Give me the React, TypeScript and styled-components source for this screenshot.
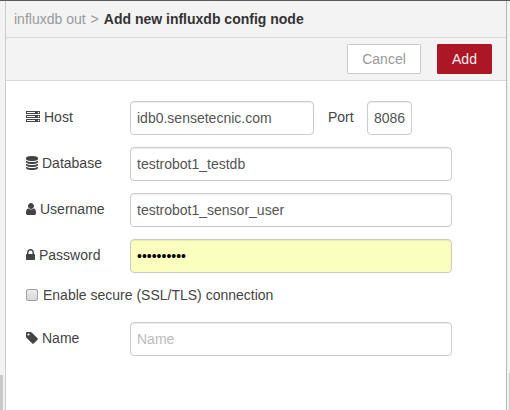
import React from "react";
import styled, { createGlobalStyle } from "styled-components";

const GlobalStyle = createGlobalStyle`
  * { box-sizing: border-box; }
  body {
    margin: 0;
    background: #f3f3f3;
    color: #444;
    font: 14px/20px "Liberation Sans", Arial, sans-serif;
  }
`;

const Workspace = styled.div`
  display: flex;
  height: 410px;
  border-top: 1px solid #5c595d;
  background: #f3f3f3;
  overflow: hidden;
`;

const Gutter = styled.div<{ $width: number }>`
  display: flex;
  flex: 0 0 ${(p) => p.$width}px;
  align-items: flex-end;
`;

const ScrollThumb = styled.div<{ $width: number; $height: number }>`
  width: ${(p) => p.$width}px;
  height: ${(p) => p.$height}px;
  margin-left: ${(p) => (p.$width === 1 ? "auto" : "0")};
  background: #c9c9c9;
`;

const Tray = styled.main`
  flex: 1;
  border-left: 1px solid #ccc;
  border-right: 1px solid #b8b8b8;
  background: #fff;
`;

const Header = styled.header`
  display: flex;
  gap: 5px;
  height: 37px;
  padding: 8px;
  border-bottom: 1px solid #d9d9d9;
  background: #f3f3f3;
  color: #999;
`;

const Title = styled.strong`
  color: #333;
`;

const Toolbar = styled.div`
  display: flex;
  justify-content: flex-end;
  gap: 16px;
  height: 43px;
  padding: 6px 14px 0 0;
  border-bottom: 1px solid #d9d9d9;
  background: #f3f3f3;
`;

const Button = styled.button<{ $primary?: boolean }>`
  width: ${(p) => (p.$primary ? 55 : 74)}px;
  height: 30px;
  padding: 0;
  border: 1px solid ${(p) => (p.$primary ? "#ad1625" : "#ccc")};
  border-radius: 1px;
  background: ${(p) => (p.$primary ? "#ad1625" : "#fff")};
  color: ${(p) => (p.$primary ? "#eee" : "#999")};
  font: inherit;
`;

const Form = styled.form`
  display: flex;
  flex-direction: column;
  gap: 12px;
  padding: 20px;
`;

const Row = styled.div`
  display: flex;
  align-items: flex-start;
  height: 34px;
`;

const Label = styled.label`
  display: flex;
  flex: 0 0 104px;
  gap: 4px;
  padding-top: 6px;
`;

const PortLabel = styled.label`
  width: 53px;
  padding: 6px 0 0 14px;
`;

const Input = styled.input<{ $width?: number; $filled?: boolean }>`
  width: ${(p) => p.$width ?? 322}px;
  height: 34px;
  padding: 0 6px 1px;
  border: 1px solid #ccc;
  border-radius: 4px;
  outline: none;
  background: ${(p) => (p.$filled ? "#faffbd" : "#fff")};
  box-shadow: inset 0 1px 1px rgba(0, 0, 0, 0.075);
  color: ${(p) => (p.$filled ? "#000" : "#555")};
  font: inherit;
  &::placeholder { color: #bbb; opacity: 1; }
`;

const CheckRow = styled.label`
  display: flex;
  align-items: center;
  gap: 5px;
  height: 20px;
  margin-bottom: 5px;
`;

const Checkbox = styled.input`
  appearance: none;
  width: 12px;
  height: 12px;
  margin: 0;
  border: 1px solid #a0a0a0;
  border-radius: 2px;
  background: linear-gradient(#ececec, #d9d9d9);
`;

const Glyph = styled.svg`
  display: block;
  flex: none;
  height: 14px;
  margin-top: 3px;
  fill: #444;
`;

const stack =
  "q237 0 443-43t325-127v170q0 69-103 128t-280 93.5-385 34.5-385-34.5-280-93.5-103-128v-170q119 84 325 127t443 43z";
const led = "q0-40-28-68t-68-28-68 28-28 68 28 68 68 28 68-28 28-68z";

const icons = {
  server: {
    x: 0,
    width: 1792,
    d: `M128 1408h1024v-128h-1024v128zM128 896h1024v-128h-1024v128zM1696 1344${led}M128 384h1024v-128h-1024v128zM1696 832${led}M1696 320${led}M1792 1152v384h-1792v-384h1792zM1792 640v384h-1792v-384h1792zM1792 128v384h-1792v-384h1792z`,
  },
  database: {
    x: 128,
    width: 1536,
    d: `M896 768${stack}M896 1536${stack}M896 1152${stack}M896 0q208 0 385 34.5t280 93.5 103 128v128q0 69-103 128t-280 93.5-385 34.5-385-34.5-280-93.5-103-128v-128q0-69 103-128t280-93.5 385-34.5z`,
  },
  user: {
    x: 256,
    width: 1280,
    d: "M1536 1399q0 109-62.5 187t-150.5 78h-854q-88 0-150.5-78t-62.5-187q0-85 8.5-160.5t31.5-152 58.5-131 94-89 134.5-34.5q131 128 313 128t313-128q76 0 134.5 34.5t94 89 58.5 131 31.5 152 8.5 160.5zm-256-887q0 159-112.5 271.5t-271.5 112.5-271.5-112.5-112.5-271.5 112.5-271.5 271.5-112.5 271.5 112.5 112.5 271.5z",
  },
  lock: {
    x: 320,
    width: 1152,
    d: "M640 768h512v-192q0-106-75-181t-181-75-181 75-75 181v192zm832 96v576q0 40-28 68t-68 28h-960q-40 0-68-28t-28-68v-576q0-40 28-68t68-28h32v-192q0-184 132-316t316-132 316 132 132 316v192h32q40 0 68 28t28 68z",
  },
  tag: {
    x: 128,
    width: 1536,
    d: "M576 448q0-53-37.5-90.5t-90.5-37.5-90.5 37.5-37.5 90.5 37.5 90.5 90.5 37.5 90.5-37.5 37.5-90.5zm1067 576q0 53-37 90l-491 492q-39 37-91 37-53 0-90-37l-715-716q-38-37-64.5-101t-26.5-117v-416q0-52 38-90t90-38h416q53 0 117 26.5t102 64.5l715 714q37 39 37 91z",
  },
};

function Icon({ name }: { name: keyof typeof icons }) {
  const { x, width, d } = icons[name];
  return (
    <Glyph viewBox={`${x} 0 ${width} 1792`} width={width / 128} aria-hidden>
      <path d={d} fillRule={name === "server" ? "evenodd" : "nonzero"} />
    </Glyph>
  );
}

export default function App() {
  return (
    <>
      <GlobalStyle />
      <Workspace>
        <Gutter $width={5}>
          <ScrollThumb $width={3} $height={35} />
        </Gutter>
        <Tray>
          <Header>
            <span>influxdb out</span>
            <span>&gt;</span>
            <Title>Add new influxdb config node</Title>
          </Header>
          <Toolbar>
            <Button type="button">Cancel</Button>
            <Button type="button" $primary>Add</Button>
          </Toolbar>
          <Form autoComplete="off">
            <Row>
              <Label htmlFor="host"><Icon name="server" />Host</Label>
              <Input id="host" $width={184} defaultValue="idb0.sensetecnic.com" />
              <PortLabel htmlFor="port">Port</PortLabel>
              <Input id="port" $width={45} defaultValue="8086" />
            </Row>
            <Row>
              <Label htmlFor="database"><Icon name="database" />Database</Label>
              <Input id="database" defaultValue="testrobot1_testdb" />
            </Row>
            <Row>
              <Label htmlFor="username"><Icon name="user" />Username</Label>
              <Input id="username" defaultValue="testrobot1_sensor_user" />
            </Row>
            <Row>
              <Label htmlFor="password"><Icon name="lock" />Password</Label>
              <Input id="password" type="password" $filled defaultValue="abcdefghij" />
            </Row>
            <CheckRow>
              <Checkbox type="checkbox" />
              Enable secure (SSL/TLS) connection
            </CheckRow>
            <Row>
              <Label htmlFor="name"><Icon name="tag" />Name</Label>
              <Input id="name" placeholder="Name" />
            </Row>
          </Form>
        </Tray>
        <Gutter $width={3}>
          <ScrollThumb $width={1} $height={37} />
        </Gutter>
      </Workspace>
    </>
  );
}
